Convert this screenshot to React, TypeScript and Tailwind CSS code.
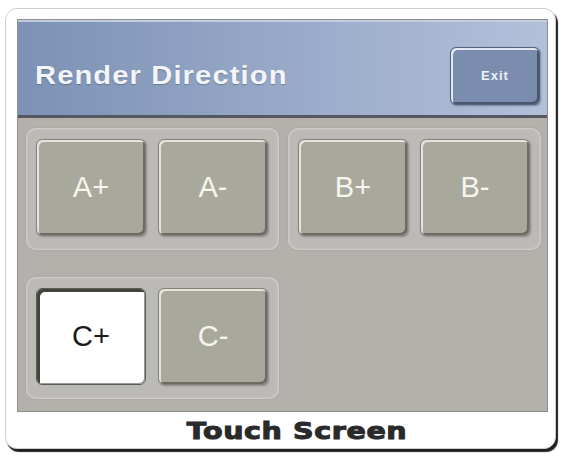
import React from 'react';

type Key = { label: string; active?: boolean };

const groups: Key[][] = [
  [{ label: 'A+' }, { label: 'A-' }],
  [{ label: 'B+' }, { label: 'B-' }],
  [{ label: 'C+', active: true }, { label: 'C-' }],
];

const KeyButton: React.FC<Key> = ({ label, active }) => (
  <button
    className={`w-[110px] h-[97px] rounded-[6px] flex items-center justify-center text-[29px] font-['Liberation_Sans',Arial,sans-serif] ${
      active
        ? 'bg-white text-[#1c1c1c] border border-[#5d5d57] shadow-[inset_3px_3px_0_#44443f,inset_-1px_-1px_0_#9a9a93]'
        : 'bg-[#a9a89c] text-[#f5f5ee] border border-[#84847d] shadow-[inset_2px_2px_0_#e4e4dc,inset_-2px_-2px_0_#6b6b64,1px_1px_2px_rgba(0,0,0,0.25)]'
    }`}
  >
    {label}
  </button>
);

const App: React.FC = () => {
  return (
    <div className="w-[565px] h-[456px] bg-white pt-[8px] pl-[5px] font-['Liberation_Sans',Arial,sans-serif]">
      <div className="w-[551px] h-[441px] rounded-[12px] border border-[#cfcfcf] bg-white shadow-[2px_3px_1px_#1f1f1f] pl-[11px] pt-[10px] flex flex-col">
        <div className="w-[531px] h-[393px] flex flex-col border border-[#8e8e8e]">
          <header className="h-[95px] shrink-0 pt-[16px] pl-[17px] pr-[7px] flex items-center justify-between bg-gradient-to-r from-[#7c91b5] via-[#98a9c8] to-[#b2c1da] shadow-[inset_0_2px_0_#c3cde0]">
            <h1 className="text-[26px] font-bold text-[#f3f5f8] tracking-[1px] origin-left scale-x-[1.12] [text-shadow:0_1px_1px_rgba(40,50,70,0.35)]">
              Render Direction
            </h1>
            <button className="w-[90px] h-[58px] rounded-[6px] bg-[#7a8daf] border border-[#55627c] shadow-[inset_2px_2px_0_#e3e8f0,inset_-2px_-2px_0_#4b566d,1px_1px_2px_rgba(0,0,0,0.3)] text-[13px] font-bold text-[#eef1f6] tracking-[1px]">
              Exit
            </button>
          </header>
          <div className="h-[3px] bg-[#55595f] shrink-0" />
          <main className="flex-1 bg-[#b4b1ad] pt-[10px] pl-[8px] grid grid-cols-[253px_253px] auto-rows-min gap-x-[9px] gap-y-[27px]">
            {groups.map((g, i) => (
              <div
                key={i}
                className="rounded-[10px] bg-[#bcbab6] shadow-[inset_0_0_3px_rgba(255,255,255,0.7),0_0_3px_rgba(0,0,0,0.08)] pl-[10px] pt-[11px] pb-[14px] flex gap-[12px]"
              >
                {g.map((k) => (
                  <KeyButton key={k.label} {...k} />
                ))}
              </div>
            ))}
          </main>
        </div>
        <div className="flex-1 flex items-center justify-center pl-[22px] pt-[3px]">
          <span className="font-['DejaVu_Sans',sans-serif] font-bold text-[23px] leading-none text-[#2a2a2a] tracking-[0.5px] scale-x-[1.24] [-webkit-text-stroke:1px_#2a2a2a]">
            Touch Screen
          </span>
        </div>
      </div>
    </div>
  );
};

export default App;
